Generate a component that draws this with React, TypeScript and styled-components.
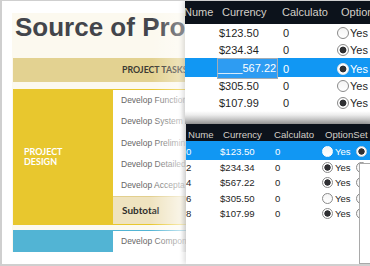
import React from "react";
import styled, { createGlobalStyle } from "styled-components";

const GlobalStyle = createGlobalStyle`
  html, body {
    margin: 0;
    padding: 0;
    background: #ffffff;
  }
`;

const Frame = styled.div`
  position: relative;
  width: 370px;
  height: 266px;
  box-sizing: border-box;
  border: solid #cfcfcf;
  border-width: 1px 0 2px 2px;
  padding: 12px 0 0 10px;
  overflow: hidden;
  background: #ffffff;
`;

/* ---------- the cost sheet behind ---------- */

const Page = styled.div`
  position: relative;
  width: 174px;
  overflow: hidden;
  padding-left: 1px;
  background: #fcf9ef;

  &::before {
    content: "";
    position: absolute;
    top: 0;
    height: 84px;
    left: 140px;
    right: 0;
    background: linear-gradient(to right, rgba(255, 255, 255, 0), rgba(255, 255, 255, 0.45));
  }
  &::after {
    content: "";
    position: absolute;
    top: 84px;
    bottom: 0;
    left: 138px;
    right: 0;
    background: linear-gradient(
      to right,
      rgba(255, 255, 255, 0) 0%,
      rgba(255, 255, 255, 0.62) 82%,
      rgba(226, 226, 226, 0.8) 100%
    );
  }
`;

const Title = styled.h1`
  margin: 0 0 17px 2px;
  font: 700 26px/28px "Liberation Sans", Arial, sans-serif;
  color: #43454b;
  white-space: nowrap;
`;

const Band = styled.div`
  height: 24px;
  margin-bottom: 7px;
  padding-left: 109px;
  background: #e3d291;
  font: 700 8.8px/24px Lato, "Liberation Sans", sans-serif;
  color: #3c3a33;
  white-space: nowrap;
`;

const Group = styled.div<{ $color: string; $closed?: boolean }>`
  display: grid;
  grid-template-columns: 100px 1fr;
  border-top: 1px solid ${(p) => p.$color};
  border-bottom: ${(p) => (p.$closed ? `1px solid ${p.$color}` : "none")};
  margin-bottom: ${(p) => (p.$closed ? "5px" : "0")};
`;

const GroupLabel = styled.div<{ $color: string }>`
  display: flex;
  align-items: center;
  padding-left: 11px;
  background: ${(p) => p.$color};
  color: #ffffff;
  font: 700 9px/10px Lato, "Liberation Sans", sans-serif;
`;

const TaskList = styled.div`
  display: flex;
  flex-direction: column;
  min-width: 0;
  background: #ffffff;
`;

const Task = styled.div`
  height: 21.25px;
  padding-left: 8px;
  font-family: "Liberation Sans", Arial, sans-serif;
  font-size: 8.5px;
  line-height: 21.25px;
  color: #666666;
  white-space: nowrap;
`;

const Subtotal = styled.div`
  box-sizing: border-box;
  height: 27.75px;
  padding-left: 9px;
  border-top: 1px solid #e2cf8e;
  background: #efe3bf;
  font-family: Lato, "Liberation Sans", sans-serif;
  font-weight: 700;
  font-size: 10px;
  line-height: 26.75px;
  color: #2e2d2a;
`;

/* ---------- the two grid screenshots on top ---------- */

const TopPanel = styled.div`
  position: absolute;
  left: 183px;
  top: -1px;
  right: 0;
  height: 124px;
  overflow: hidden;
  background: linear-gradient(to bottom, #ffffff 0, #ffffff 111px, #ececec 115px, #9c9c9c 124px);
  box-shadow: -2px 0 5px rgba(0, 0, 0, 0.14);
  font-family: "Liberation Sans", Arial, sans-serif;
  font-size: 11px;
`;

const BottomPanel = styled.div`
  position: absolute;
  left: 184px;
  top: 123px;
  right: 0;
  bottom: 0;
  overflow: hidden;
  background: #ffffff;
  box-shadow: -2px 0 5px rgba(0, 0, 0, 0.14);
  font-family: "Liberation Sans", Arial, sans-serif;
  font-size: 9.6px;
`;

const Grid = styled.div<{ $shift: number }>`
  margin-left: ${(p) => p.$shift}px;
`;

const Row = styled.div<{ $cols: string; $h: number; $bg?: string; $fg?: string; $top?: number }>`
  display: grid;
  grid-template-columns: ${(p) => p.$cols};
  height: ${(p) => p.$h}px;
  box-sizing: border-box;
  padding-top: ${(p) => p.$top ?? 0}px;
  align-items: center;
  background: ${(p) => p.$bg ?? "transparent"};
  color: ${(p) => p.$fg ?? "#1f1f1f"};
`;

const Cell = styled.div<{ $pad?: number }>`
  display: flex;
  align-items: center;
  padding-left: ${(p) => Math.max(p.$pad ?? 0, 0)}px;
  margin-left: ${(p) => Math.min(p.$pad ?? 0, 0)}px;
  white-space: nowrap;
`;

const Editor = styled.span`
  display: inline-block;
  box-sizing: border-box;
  width: 61px;
  height: 21px;
  line-height: 19px;
  padding-right: 1px;
  border: 1px solid #a3acb5;
  background: #2e9cf2;
  color: #ffffff;
  text-align: right;
`;

const Radio = styled.span<{ $on?: boolean; $size: number; $ring?: string; $gap?: number }>`
  display: inline-block;
  flex: none;
  box-sizing: border-box;
  width: ${(p) => p.$size}px;
  height: ${(p) => p.$size}px;
  margin-left: ${(p) => p.$gap ?? 0}px;
  border-radius: 50%;
  border: 1px solid ${(p) => p.$ring ?? "#8a8a8a"};
  background: ${(p) =>
    p.$on
      ? `radial-gradient(circle, #2f3033 0 ${p.$size * 0.26}px, #ffffff ${p.$size * 0.26 + 0.6}px)`
      : "linear-gradient(#f4f4f4, #ffffff)"};
`;

const Yes = styled.span<{ $gap: number }>`
  margin-left: ${(p) => p.$gap}px;
`;

const Popup = styled.div`
  position: absolute;
  left: 173px;
  top: 39px;
  right: -2px;
  bottom: 0;
  background: #ffffff;
  border: 1px solid #a9a9a9;
`;

const TOP_COLS = "38px 60px 59px 1fr";
const BOTTOM_COLS = "34px 54px 48px 1fr";
const HEAD_BG = "#0c121b";
const HEAD_FG = "#d3cfc8";
const SELECT_BG = "#1197f3";

const topRows = [
  { value: "$123.50", on: false },
  { value: "$234.34", on: true },
  { value: "____567.22", on: true, editing: true },
  { value: "$305.50", on: false },
  { value: "$107.99", on: true },
];

const bottomRows = [
  { num: "0", value: "$123.50", on: false, second: true },
  { num: "2", value: "$234.34", on: true },
  { num: "4", value: "$567.22", on: true },
  { num: "6", value: "$305.50", on: false },
  { num: "8", value: "$107.99", on: true },
];

const App = () => {
  return (
    <Frame>
      <GlobalStyle />
      <Page>
        <Title>Source of Pro</Title>
        <Band>PROJECT TASKS</Band>
        <Group $color="#e8c72e" $closed>
          <GroupLabel $color="#e8c72e">
            PROJECT
            <br />
            DESIGN
          </GroupLabel>
          <TaskList>
            <Task>Develop Functional</Task>
            <Task>Develop System</Task>
            <Task>Develop Prelimin</Task>
            <Task>Develop Detailed</Task>
            <Task>Develop Accepta</Task>
            <Subtotal>Subtotal</Subtotal>
          </TaskList>
        </Group>
        <Group $color="#52b4d4">
          <GroupLabel $color="#52b4d4" />
          <TaskList>
            <Task>Develop Components</Task>
          </TaskList>
        </Group>
      </Page>

      <TopPanel>
        <Grid $shift={-5}>
          <Row $cols={TOP_COLS} $h={24} $bg={HEAD_BG} $fg={HEAD_FG}>
            <Cell $pad={4}>Nume</Cell>
            <Cell $pad={4}>Currency</Cell>
            <Cell $pad={4}>Calculato</Cell>
            <Cell $pad={4}>Options</Cell>
          </Row>
          {topRows.map((r) => (
            <Row
              key={r.value}
              $cols={TOP_COLS}
              $h={r.editing ? 19 : 17}
              $bg={r.editing ? SELECT_BG : undefined}
              $fg={r.editing ? "#ffffff" : undefined}
            >
              <Cell />
              {r.editing ? (
                <Cell $pad={-1}>
                  <Editor>{r.value}</Editor>
                </Cell>
              ) : (
                <Cell $pad={1}>{r.value}</Cell>
              )}
              <Cell $pad={5}>0</Cell>
              <Cell>
                <Radio $size={12} $on={r.on} $ring={r.editing ? "#e6e6e6" : undefined} />
                <Yes $gap={1}>Yes</Yes>
              </Cell>
            </Row>
          ))}
        </Grid>
      </TopPanel>

      <BottomPanel>
        <Row $cols={BOTTOM_COLS} $h={17} $top={3} $bg={HEAD_BG} $fg={HEAD_FG}>
          <Cell $pad={2}>Nume</Cell>
          <Cell $pad={3}>Currency</Cell>
          <Cell>Calculato</Cell>
          <Cell $pad={3}>OptionSet</Cell>
        </Row>
        {bottomRows.map((r, i) => (
          <Row
            key={r.num}
            $cols={BOTTOM_COLS}
            $h={i === 0 ? 18.5 : 15.5}
            $top={i === 0 ? 1.5 : 0}
            $bg={i === 0 ? SELECT_BG : undefined}
            $fg={i === 0 ? "#ffffff" : undefined}
          >
            <Cell>{r.num}</Cell>
            <Cell>{r.value}</Cell>
            <Cell $pad={1}>0</Cell>
            <Cell>
              <Radio $size={11} $on={r.on} $ring={i === 0 ? "#ffffff" : undefined} />
              <Yes $gap={2}>Yes</Yes>
              <Radio $size={11} $gap={5} $on={!!r.second} $ring={i === 0 ? "#d8d8d8" : undefined} />
            </Cell>
          </Row>
        ))}
        <Popup />
      </BottomPanel>
    </Frame>
  );
};

export default App;
